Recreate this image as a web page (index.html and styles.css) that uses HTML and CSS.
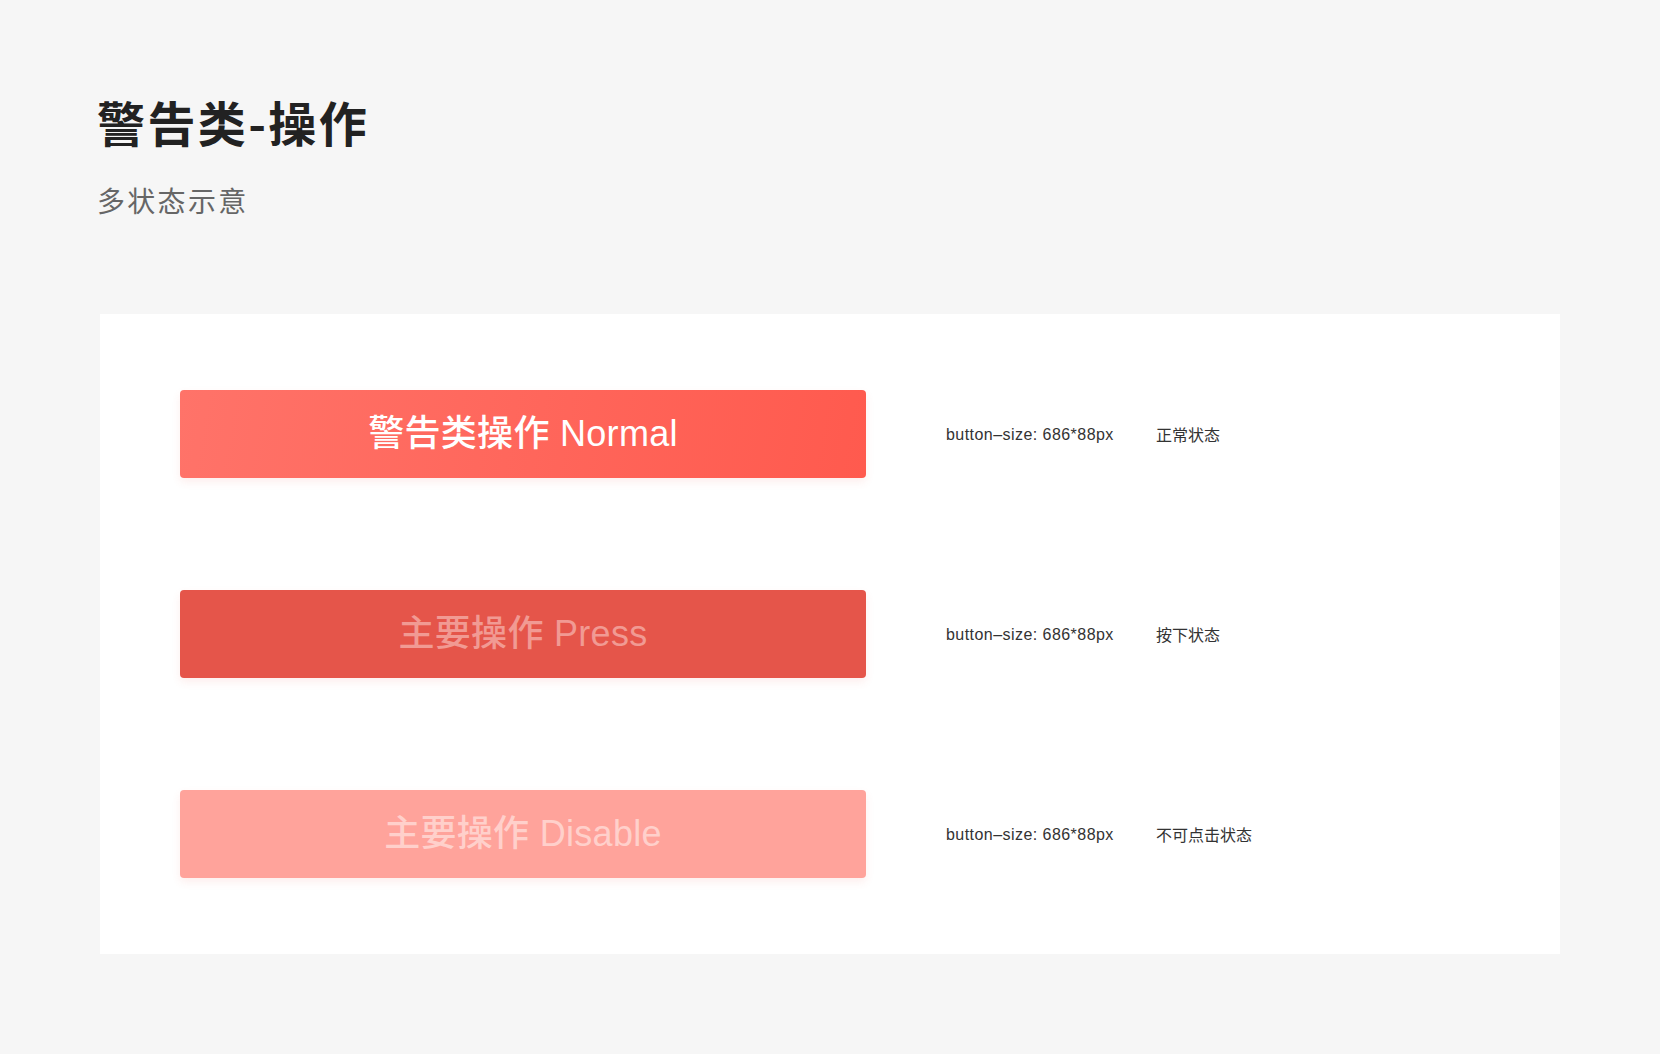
FILE: index.html
```html
<!DOCTYPE html>
<html lang="zh-CN">
<head>
<meta charset="utf-8">
<title>警告类-操作</title>
<link rel="stylesheet" href="styles.css">
</head>
<body>
<div class="page">
  <header class="header">
    <h1 class="title">警告类-操作</h1>
    <p class="subtitle">多状态示意</p>
  </header>
  <section class="card">
    <div class="row">
      <div class="btn btn-normal">警告类操作 Normal</div>
      <div class="info">
        <span class="size">button–size: 686*88px</span>
        <span class="state">正常状态</span>
      </div>
    </div>
    <div class="row">
      <div class="btn btn-press">主要操作 Press</div>
      <div class="info">
        <span class="size">button–size: 686*88px</span>
        <span class="state">按下状态</span>
      </div>
    </div>
    <div class="row">
      <div class="btn btn-disable">主要操作 Disable</div>
      <div class="info">
        <span class="size">button–size: 686*88px</span>
        <span class="state">不可点击状态</span>
      </div>
    </div>
  </section>
</div>
</body>
</html>
```

FILE: styles.css
```css
* { box-sizing: border-box; }
html, body {
  margin: 0;
  padding: 0;
  background: #f6f6f6;
}
body {
  font-family: "Liberation Sans", "Noto Sans CJK SC", sans-serif;
  color: #333;
}
.page {
  width: 1660px;
  min-height: 1054px;
  padding: 97px 100px 0 100px;
}
.title {
  margin: 0 0 0 -3px;
  font-family: "Noto Sans CJK SC", sans-serif;
  font-size: 48px;
  line-height: 48px;
  font-weight: 700;
  color: #222;
  letter-spacing: 2.4px;
}
.subtitle {
  margin: 41px 0 0 -3px;
  font-family: "Noto Sans CJK SC", sans-serif;
  font-size: 28px;
  line-height: 28px;
  font-weight: 400;
  color: #666;
  letter-spacing: 2.3px;
}
.card {
  margin-top: 100px;
  width: 1460px;
  background: #fff;
  padding: 76px 80px;
  display: flex;
  flex-direction: column;
  gap: 112px;
}
.row {
  display: flex;
  align-items: center;
}
.btn {
  width: 686px;
  height: 88px;
  border-radius: 4px;
  display: flex;
  align-items: center;
  justify-content: center;
  font-size: 36px;
  line-height: 1;
  font-weight: 500;
  letter-spacing: 0.3px;
  box-shadow: 0 4px 8px rgba(240, 90, 80, 0.10);
}
.btn-normal {
  background: linear-gradient(100deg, #ff7369 0%, #ff5a4e 100%);
  color: #fff;
}
.btn-press {
  background: #e5554a;
  color: #f19a93;
}
.btn-disable {
  background: #ffa39b;
  color: #ffd0cb;
}
.info {
  margin-left: 80px;
  display: flex;
  align-items: center;
  font-size: 16px;
  line-height: 20px;
  color: #333;
}
.size {
  width: 210px;
  letter-spacing: 0.45px;
  position: relative;
  top: 1px;
}
.state {
  font-family: "Noto Sans CJK SC", sans-serif;
}
```
